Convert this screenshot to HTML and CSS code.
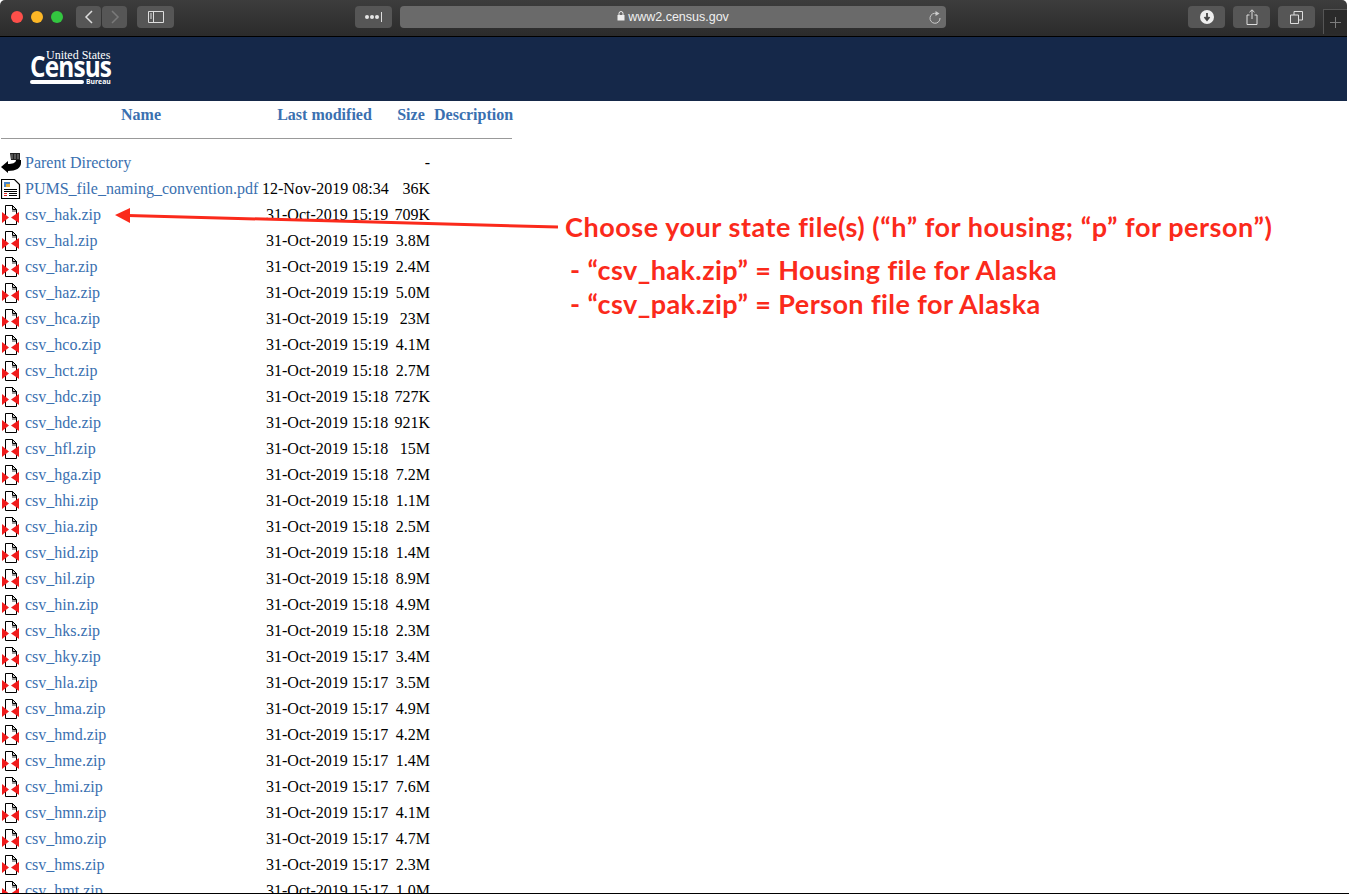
FILE: index.html
```html
<!DOCTYPE html>
<html lang="en">
<head>
    <meta charset="UTF-8">
    <meta name="viewport" content="width=device-width, initial-scale=1.0">
    <title>Index of PUMS files</title>
    <link rel="stylesheet" href="styles.css">
</head>
<body>
    <svg class="defs" width="0" height="0">
        <symbol id="icon-zip" viewBox="0 0 20 22">
            <path d="M4.500 1.500h7l4 4v15h-11z" fill="#fff" stroke="#000"/>
            <path d="M11.500 1.500v4h4z" fill="#ccc" stroke="#000"/>
            <path d="M11 6h4v2h-4z" fill="#999"/>
            <path d="M1 8l7 5.500-7 5.500zM18 8l-8 5.500 8 5.500z" fill="#f01c1c"/>
        </symbol>
    </svg>
    <div class="toolbar">
        <div class="lights">
            <span class="light red"></span>
            <span class="light yellow"></span>
            <span class="light green"></span>
        </div>
        <div class="btn nav-btn"><svg width="10" height="14" viewBox="0 0 10 14"><path d="M8 1L2 7l6 6" fill="none" stroke="#ddd" stroke-width="1.500"/></svg></div>
        <div class="btn nav-btn next"><svg width="10" height="14" viewBox="0 0 10 14"><path d="M2 1l6 6-6 6" fill="none" stroke="#7a7a7a" stroke-width="1.500"/></svg></div>
        <div class="btn wide sidebar-btn"><svg width="16" height="12" viewBox="0 0 16 12"><path d="M.5.5h15v11H.5zM5.500.5v11" fill="none" stroke="#ddd"/><path d="M2 3h2M2 5h2M2 7h2" stroke="#ddd"/></svg></div>
        <div class="btn wide dots-btn"><svg width="18" height="12" viewBox="0 0 18 12"><circle cx="2" cy="6" r="2" fill="#e6e6e6"/><circle cx="7" cy="6" r="2" fill="#e6e6e6"/><circle cx="12" cy="6" r="2" fill="#e6e6e6"/><path d="M16.500 1v10" stroke="#ddd"/></svg></div>
        <div class="url">
            <span class="host"><svg width="8" height="10" viewBox="0 0 8 10"><path d="M2 4V2.500a2 2 0 0 1 4 0V4" fill="none" stroke="#eee"/><path d="M.5 4h7v5.500h-7z" fill="#eee"/></svg>www2.census.gov</span>
            <svg class="reload" width="12" height="13" viewBox="0 0 12 13"><path d="M7.500 2.500A5 5 0 1 0 11 7" fill="none" stroke="#ccc"/><path d="M6.500 0l4 2.500-4 2.500z" fill="#ccc"/></svg>
        </div>
        <div class="btn wide"><svg width="14" height="14" viewBox="0 0 14 14"><circle cx="7" cy="7" r="7" fill="#eee"/><path d="M7 3v6M4.500 7L7 10l2.500-3" fill="none" stroke="#444" stroke-width="1.800"/></svg></div>
        <div class="btn wide"><svg width="12" height="16" viewBox="0 0 12 16"><path d="M3.500 6H1v9.500h10V6H8.500M6 10V1M3.500 3.200L6 .8l2.500 2.400" fill="none" stroke="#ddd"/></svg></div>
        <div class="btn wide"><svg width="13" height="13" viewBox="0 0 13 13"><path d="M.5 4h8v8.500h-8zM4 4V.5h8.500V9H9" fill="none" stroke="#ddd"/></svg></div>
        <div class="new-tab"><svg width="11" height="11" viewBox="0 0 11 11"><path d="M5.500 0v11M0 5.500h11" stroke="#7d7d7d"/></svg></div>
    </div>
    <div class="banner">
        <div class="logo">
            <span class="logo-top">United States</span>
            <span class="logo-main">Census</span>
            <div class="logo-bottom"><span class="logo-rule"></span><span class="logo-bureau">Bureau</span></div>
        </div>
    </div>
    <table class="listing">
        <colgroup><col class="c-icon"><col class="c-name"><col class="c-date"><col class="c-size"><col class="c-desc"></colgroup>
        <tr class="head"><th></th><th><a href="#">Name</a></th><th><a href="#">Last modified</a></th><th><a href="#">Size</a></th><th class="desc"><a href="#">Description</a></th></tr>
        <tr class="rule"><th colspan="5"><hr></th></tr>
        <tr>
            <td class="icon"><svg width="20" height="22" viewBox="0 0 20 22"><path d="M0 15l7-6v3c4 0 8-1 8-4h5v3c0 5-5 8-13 8v2z" fill="#000"/><path d="M9 1h10v7H10z" fill="#222"/><path d="M11 2v5M14 2v5M17 2v5" stroke="#888"/></svg></td>
            <td><a href="#">Parent Directory</a></td><td></td><td class="size">-</td><td></td>
        </tr>
        <tr>
            <td class="icon"><svg width="20" height="22" viewBox="0 0 20 22"><path d="M.5 1.500h13l5 5v14H.5z" fill="#fff" stroke="#000" stroke-width="1.200"/><path d="M3 4h6v5H3z" fill="#4a86c8"/><path d="M5 6h4v3H5z" fill="#e8b040"/><path d="M3 11.500h13M3 13.500h13M8 15.500h8M8 17.500h8" stroke="#000"/><path d="M3 15.500h3M3 17.500h3" stroke="#e02020"/></svg></td>
            <td><a href="#">PUMS_file_naming_convention.pdf</a></td><td class="date-first">12-Nov-2019 08:34</td><td class="size">36K</td><td></td>
        </tr>
        <tr><td class="icon"><svg width="20" height="22"><use href="#icon-zip"/></svg></td><td><a href="#">csv_hak.zip</a></td><td class="date">31-Oct-2019 15:19</td><td class="size">709K</td><td></td></tr>
        <tr><td class="icon"><svg width="20" height="22"><use href="#icon-zip"/></svg></td><td><a href="#">csv_hal.zip</a></td><td class="date">31-Oct-2019 15:19</td><td class="size">3.8M</td><td></td></tr>
        <tr><td class="icon"><svg width="20" height="22"><use href="#icon-zip"/></svg></td><td><a href="#">csv_har.zip</a></td><td class="date">31-Oct-2019 15:19</td><td class="size">2.4M</td><td></td></tr>
        <tr><td class="icon"><svg width="20" height="22"><use href="#icon-zip"/></svg></td><td><a href="#">csv_haz.zip</a></td><td class="date">31-Oct-2019 15:19</td><td class="size">5.0M</td><td></td></tr>
        <tr><td class="icon"><svg width="20" height="22"><use href="#icon-zip"/></svg></td><td><a href="#">csv_hca.zip</a></td><td class="date">31-Oct-2019 15:19</td><td class="size">23M</td><td></td></tr>
        <tr><td class="icon"><svg width="20" height="22"><use href="#icon-zip"/></svg></td><td><a href="#">csv_hco.zip</a></td><td class="date">31-Oct-2019 15:19</td><td class="size">4.1M</td><td></td></tr>
        <tr><td class="icon"><svg width="20" height="22"><use href="#icon-zip"/></svg></td><td><a href="#">csv_hct.zip</a></td><td class="date">31-Oct-2019 15:18</td><td class="size">2.7M</td><td></td></tr>
        <tr><td class="icon"><svg width="20" height="22"><use href="#icon-zip"/></svg></td><td><a href="#">csv_hdc.zip</a></td><td class="date">31-Oct-2019 15:18</td><td class="size">727K</td><td></td></tr>
        <tr><td class="icon"><svg width="20" height="22"><use href="#icon-zip"/></svg></td><td><a href="#">csv_hde.zip</a></td><td class="date">31-Oct-2019 15:18</td><td class="size">921K</td><td></td></tr>
        <tr><td class="icon"><svg width="20" height="22"><use href="#icon-zip"/></svg></td><td><a href="#">csv_hfl.zip</a></td><td class="date">31-Oct-2019 15:18</td><td class="size">15M</td><td></td></tr>
        <tr><td class="icon"><svg width="20" height="22"><use href="#icon-zip"/></svg></td><td><a href="#">csv_hga.zip</a></td><td class="date">31-Oct-2019 15:18</td><td class="size">7.2M</td><td></td></tr>
        <tr><td class="icon"><svg width="20" height="22"><use href="#icon-zip"/></svg></td><td><a href="#">csv_hhi.zip</a></td><td class="date">31-Oct-2019 15:18</td><td class="size">1.1M</td><td></td></tr>
        <tr><td class="icon"><svg width="20" height="22"><use href="#icon-zip"/></svg></td><td><a href="#">csv_hia.zip</a></td><td class="date">31-Oct-2019 15:18</td><td class="size">2.5M</td><td></td></tr>
        <tr><td class="icon"><svg width="20" height="22"><use href="#icon-zip"/></svg></td><td><a href="#">csv_hid.zip</a></td><td class="date">31-Oct-2019 15:18</td><td class="size">1.4M</td><td></td></tr>
        <tr><td class="icon"><svg width="20" height="22"><use href="#icon-zip"/></svg></td><td><a href="#">csv_hil.zip</a></td><td class="date">31-Oct-2019 15:18</td><td class="size">8.9M</td><td></td></tr>
        <tr><td class="icon"><svg width="20" height="22"><use href="#icon-zip"/></svg></td><td><a href="#">csv_hin.zip</a></td><td class="date">31-Oct-2019 15:18</td><td class="size">4.9M</td><td></td></tr>
        <tr><td class="icon"><svg width="20" height="22"><use href="#icon-zip"/></svg></td><td><a href="#">csv_hks.zip</a></td><td class="date">31-Oct-2019 15:18</td><td class="size">2.3M</td><td></td></tr>
        <tr><td class="icon"><svg width="20" height="22"><use href="#icon-zip"/></svg></td><td><a href="#">csv_hky.zip</a></td><td class="date">31-Oct-2019 15:17</td><td class="size">3.4M</td><td></td></tr>
        <tr><td class="icon"><svg width="20" height="22"><use href="#icon-zip"/></svg></td><td><a href="#">csv_hla.zip</a></td><td class="date">31-Oct-2019 15:17</td><td class="size">3.5M</td><td></td></tr>
        <tr><td class="icon"><svg width="20" height="22"><use href="#icon-zip"/></svg></td><td><a href="#">csv_hma.zip</a></td><td class="date">31-Oct-2019 15:17</td><td class="size">4.9M</td><td></td></tr>
        <tr><td class="icon"><svg width="20" height="22"><use href="#icon-zip"/></svg></td><td><a href="#">csv_hmd.zip</a></td><td class="date">31-Oct-2019 15:17</td><td class="size">4.2M</td><td></td></tr>
        <tr><td class="icon"><svg width="20" height="22"><use href="#icon-zip"/></svg></td><td><a href="#">csv_hme.zip</a></td><td class="date">31-Oct-2019 15:17</td><td class="size">1.4M</td><td></td></tr>
        <tr><td class="icon"><svg width="20" height="22"><use href="#icon-zip"/></svg></td><td><a href="#">csv_hmi.zip</a></td><td class="date">31-Oct-2019 15:17</td><td class="size">7.6M</td><td></td></tr>
        <tr><td class="icon"><svg width="20" height="22"><use href="#icon-zip"/></svg></td><td><a href="#">csv_hmn.zip</a></td><td class="date">31-Oct-2019 15:17</td><td class="size">4.1M</td><td></td></tr>
        <tr><td class="icon"><svg width="20" height="22"><use href="#icon-zip"/></svg></td><td><a href="#">csv_hmo.zip</a></td><td class="date">31-Oct-2019 15:17</td><td class="size">4.7M</td><td></td></tr>
        <tr><td class="icon"><svg width="20" height="22"><use href="#icon-zip"/></svg></td><td><a href="#">csv_hms.zip</a></td><td class="date">31-Oct-2019 15:17</td><td class="size">2.3M</td><td></td></tr>
        <tr><td class="icon"><svg width="20" height="22"><use href="#icon-zip"/></svg></td><td><a href="#">csv_hmt.zip</a></td><td class="date">31-Oct-2019 15:17</td><td class="size">1.0M</td><td></td></tr>
    </table>
    <svg class="arrow" width="446" height="24" viewBox="0 0 446 24"><path d="M444 22L14 10.500" stroke="#fb2a1b" stroke-width="3" fill="none"/><path d="M1 10l15-7v15z" fill="#fb2a1b"/></svg>
    <div class="note">
        <p class="note-title">Choose your state file(s) (&ldquo;h&rdquo; for housing; &ldquo;p&rdquo; for person&rdquo;)</p>
        <p class="note-item">- &ldquo;csv_hak.zip&rdquo; = Housing file for Alaska</p>
        <p class="note-item">- &ldquo;csv_pak.zip&rdquo; = Person file for Alaska</p>
    </div>
    <div class="bottom-line"></div>
</body>
</html>
```

FILE: styles.css
```css
html, body {
    height: 100%;
}

body {
    margin: 0;
    position: relative;
    overflow: hidden;
    background-color: #fff;
    font-family: "Liberation Serif", serif;
    font-size: 16px;
    color: #000;
}

.defs {
    position: absolute;
}

/* browser chrome */
.toolbar {
    display: flex;
    align-items: center;
    box-sizing: border-box;
    height: 37px;
    margin-right: 2px;
    padding-bottom: 2px;
    background: linear-gradient(#3d3d3d, #2b2b2b);
    border-bottom: 1px solid #000;
    border-radius: 5px 5px 0 0;
    font-family: "Liberation Sans", sans-serif;
}

.lights {
    display: flex;
    gap: 8px;
    margin-left: 11px;
    margin-right: 13px;
}

.light {
    width: 12px;
    height: 12px;
    border-radius: 50%;
}

.red { background-color: #fc4f4a; }
.yellow { background-color: #fdb726; }
.green { background-color: #33c640; }

.btn {
    display: flex;
    align-items: center;
    justify-content: center;
    height: 22px;
    border-radius: 4px;
    background-color: #565656;
}

.nav-btn {
    width: 25px;
}

.next {
    margin-left: 1px;
}

.wide {
    width: 37px;
}

.sidebar-btn {
    margin-left: 10px;
}

.dots-btn {
    margin-left: 181px;
}

.url {
    position: relative;
    display: flex;
    align-items: center;
    justify-content: center;
    width: 546px;
    height: 22px;
    margin-left: 8px;
    margin-right: 242px;
    border-radius: 4px;
    background-color: #6a6a6a;
    color: #f0f0f0;
    font-size: 12.500px;
}

.host svg {
    margin-right: 3px;
}

.reload {
    position: absolute;
    right: 5px;
    top: 5px;
}

.toolbar > .btn:nth-last-child(2),
.toolbar > .btn:nth-last-child(3) {
    margin-left: 8px;
}

.new-tab {
    display: flex;
    align-items: center;
    justify-content: center;
    box-sizing: border-box;
    width: 24px;
    height: 25px;
    margin-left: 8px;
    margin-top: 2px;
    align-self: flex-end;
    border: 1px solid #555;
    border-bottom: 0;
    border-right: 0;
    background-color: #2a2a2a;
}

/* census banner */
.banner {
    box-sizing: border-box;
    height: 64px;
    margin-right: 2px;
    padding: 14px 0 0 30px;
    background-color: #152849;
    color: #fff;
}

.logo {
    width: 84px;
    font-family: "Open Sans", sans-serif;
}

.logo-top {
    display: block;
    margin-left: 16px;
    font-family: "Liberation Serif", serif;
    font-size: 12px;
    line-height: 9px;
    white-space: nowrap;
}

.logo-main {
    display: block;
    margin-top: -4px;
    font-size: 29px;
    font-weight: 700;
    line-height: 20px;
    letter-spacing: -1px;
    transform: scaleX(.84);
    transform-origin: left;
}

.logo-bottom {
    display: flex;
    align-items: center;
    gap: 2px;
    margin-top: 2px;
}

.logo-rule {
    width: 54px;
    height: 4px;
    border-radius: 2px;
    background-color: #fff;
}

.logo-bureau {
    font-size: 6.800px;
    font-weight: 700;
    line-height: 7px;
}

/* directory listing */
.listing {
    border-collapse: collapse;
    table-layout: fixed;
    width: 513px;
}

.c-icon { width: 25px; }
.c-name { width: 232px; }
.c-date { width: 135px; }
.c-size { width: 38px; }
.c-desc { width: 83px; }

.listing td,
.listing th {
    padding: 0;
    height: 26px;
    white-space: nowrap;
    text-align: left;
}

.listing a {
    color: #3a70b0;
    text-decoration: none;
}

.listing .head th {
    height: 28px;
    text-align: center;
}

.listing .head .desc {
    padding-left: 4px;
}

.listing .rule th {
    height: 21px;
    padding-top: 0;
}

.rule hr {
    margin: 0 1px 3px 1px;
    height: 1px;
    border: 0;
    background-color: #999;
}

.listing .icon {
    line-height: 0;
    vertical-align: middle;
}

.icon svg {
    margin-left: 1px;
}

.listing .date {
    padding-left: 9px;
}

.listing .date-first {
    padding-left: 5px;
}

.listing .size {
    text-align: right;
}

/* annotation over the listing */
.arrow {
    position: absolute;
    left: 114px;
    top: 205px;
}

.note {
    position: absolute;
    left: 565px;
    top: 209px;
    color: #fb2a1b;
    font-family: "Lato", sans-serif;
    font-size: 27px;
    font-weight: 700;
    letter-spacing: .55px;
}

.note p {
    margin: 0;
    white-space: nowrap;
}

.note .note-title {
    margin-bottom: 8px;
    line-height: 36px;
}

.note .note-item {
    margin-left: 5px;
    line-height: 34px;
    letter-spacing: .42px;
}

.bottom-line {
    position: absolute;
    left: 0;
    right: 0;
    bottom: 0;
    height: 1px;
    background-color: #000;
}
```
